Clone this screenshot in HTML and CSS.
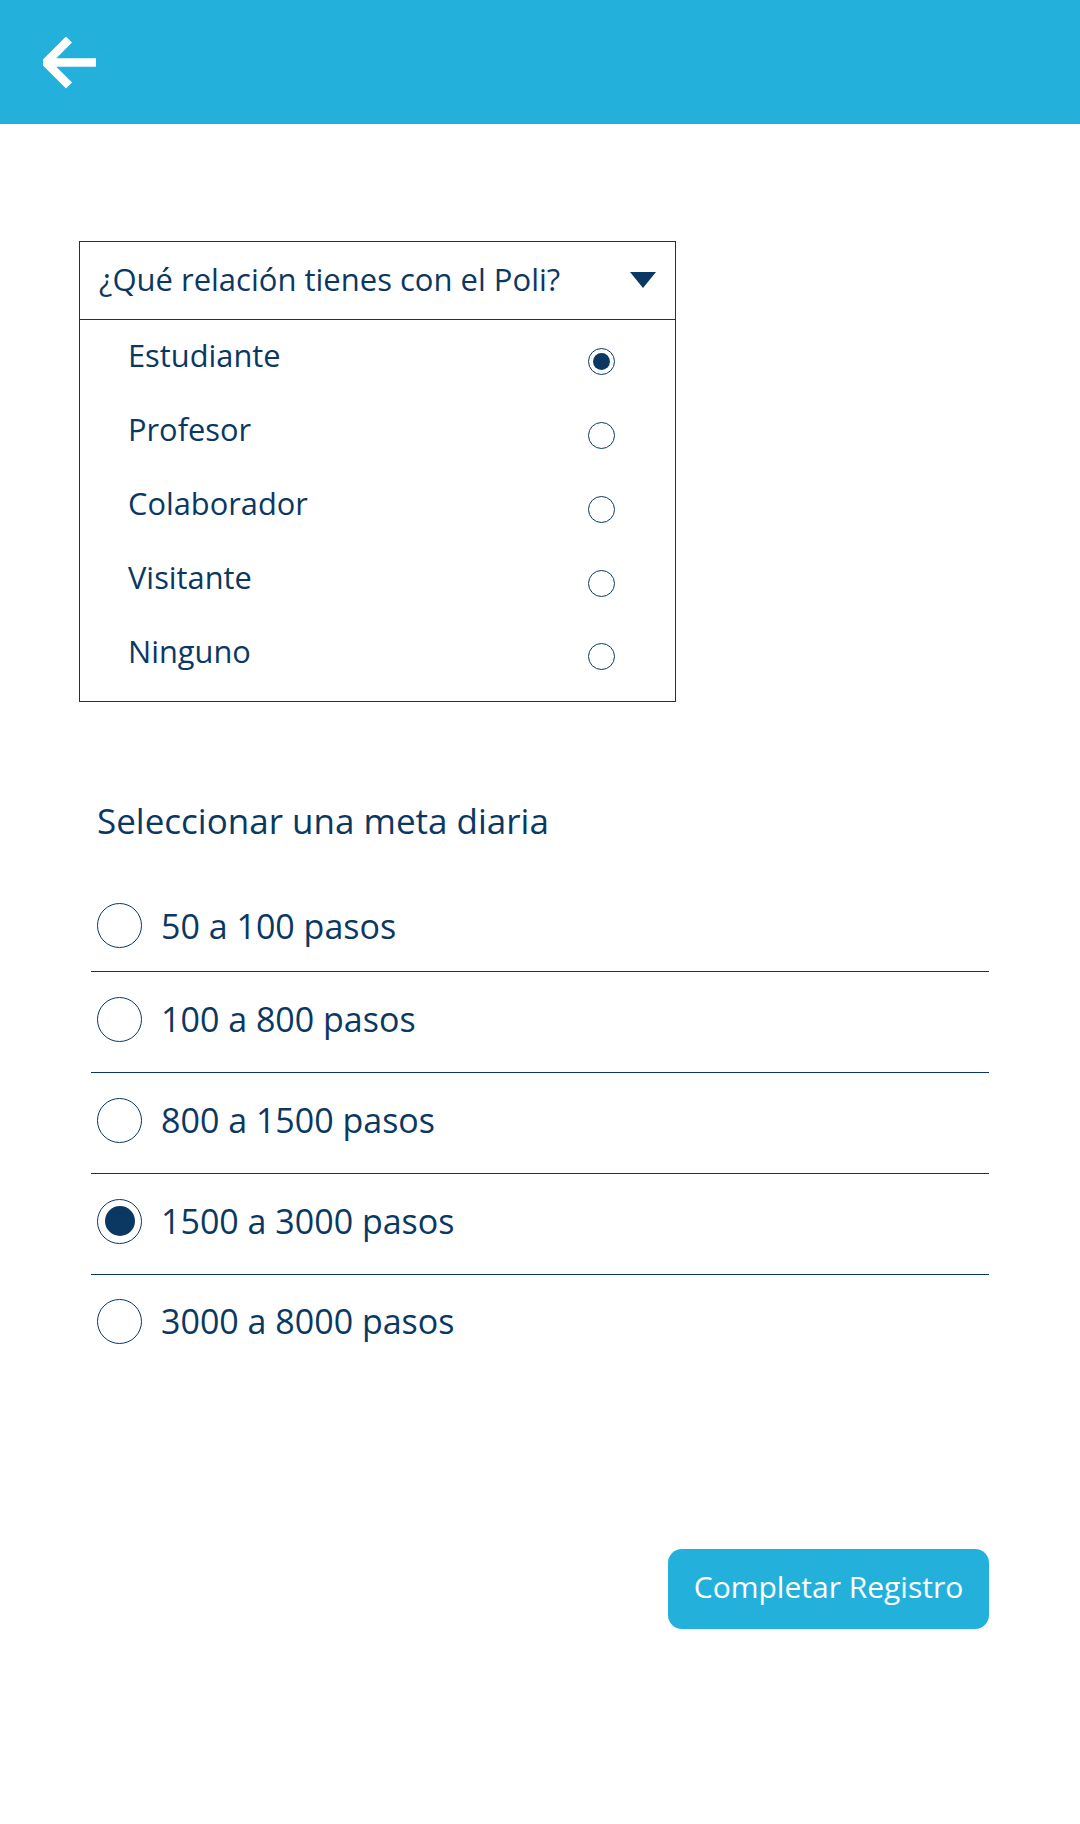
FILE: index.html
```html
<!DOCTYPE html>
<html lang="es">
<head>
<meta charset="utf-8">
<title>Registro</title>
<link rel="stylesheet" href="styles.css">
</head>
<body>
<header class="topbar">
  <svg class="back" width="54" height="52" viewBox="0 0 54 52" aria-label="Volver">
    <path d="M53 25.5H5 M26 2.5L3 25.5L26 48.5" fill="none" stroke="#fff" stroke-width="8.5" stroke-linejoin="miter" stroke-miterlimit="4"/>
  </svg>
</header>
<main class="content">
  <section class="dropdown">
    <div class="dropdown-head">
      <span class="dropdown-title">¿Qué relación tienes con el Poli?</span>
      <span class="caret"></span>
    </div>
    <ul class="dropdown-list">
      <li class="opt"><span class="opt-label">Estudiante</span><span class="radio-s checked"></span></li>
      <li class="opt"><span class="opt-label">Profesor</span><span class="radio-s"></span></li>
      <li class="opt"><span class="opt-label">Colaborador</span><span class="radio-s"></span></li>
      <li class="opt"><span class="opt-label">Visitante</span><span class="radio-s"></span></li>
      <li class="opt"><span class="opt-label">Ninguno</span><span class="radio-s"></span></li>
    </ul>
  </section>
  <section class="goals">
    <h2 class="goals-title">Seleccionar una meta diaria</h2>
    <ul class="goal-list">
      <li class="goal first"><span class="radio-l"></span><span class="goal-label">50 a 100 pasos</span></li>
      <li class="goal"><span class="radio-l"></span><span class="goal-label">100 a 800 pasos</span></li>
      <li class="goal"><span class="radio-l"></span><span class="goal-label">800 a 1500 pasos</span></li>
      <li class="goal"><span class="radio-l checked"></span><span class="goal-label">1500 a 3000 pasos</span></li>
      <li class="goal last"><span class="radio-l"></span><span class="goal-label">3000 a 8000 pasos</span></li>
    </ul>
  </section>
  <div class="actions">
    <button class="btn">Completar Registro</button>
  </div>
</main>
</body>
</html>
```

FILE: styles.css
```css
* { box-sizing: border-box; }
html, body { margin: 0; padding: 0; }
body {
  width: 1080px;
  height: 1824px;
  background: #fff;
  font-family: "Open Sans", "Noto Sans", sans-serif;
  color: #0b3863;
}
.topbar {
  height: 124px;
  background: #23b1dc;
  display: flex;
  align-items: center;
  padding-left: 43px;
}
.back { display: block; margin-top: 2px; }
.content { display: flex; flex-direction: column; }

.dropdown {
  margin: 117px 0 0 79px;
  width: 597px;
}
.dropdown-head {
  height: 79px;
  border: 1.5px solid #0b3863;
  display: flex;
  align-items: center;
  justify-content: space-between;
  padding: 0 19px 0 19px;
}
.dropdown-title { font-size: 31px; line-height: 40px; margin-top: -4px; }
.caret {
  width: 0; height: 0;
  border-left: 13px solid transparent;
  border-right: 13px solid transparent;
  border-top: 16px solid #0b3863;
  margin-top: -2px;
}
.dropdown-list {
  list-style: none;
  margin: 0;
  border: 1.5px solid #0b3863;
  border-top: none;
  padding: 4px 60px 8px 48px;
}
.opt {
  height: 74px;
  display: flex;
  align-items: center;
  justify-content: space-between;
}
.opt:last-child { height: 73px; }
.opt-label { font-size: 30.8px; line-height: 40px; margin-top: -12px; }
.radio-s {
  width: 27px; height: 27px;
  border: 1.5px solid #0b3863;
  border-radius: 50%;
  display: flex; align-items: center; justify-content: center;
}
.radio-s.checked::after {
  content: "";
  width: 17px; height: 17px;
  border-radius: 50%;
  background: #0b3863;
}

.goals { margin: 96px 0 0 91px; width: 898px; }
.goals-title {
  margin: 0 0 0 6px;
  font-weight: 400;
  font-size: 35px;
  line-height: 46px;
}
.goal-list { list-style: none; margin: 36px 0 0; padding: 0; }
.goal {
  height: 101px;
  display: flex;
  align-items: center;
  gap: 19px;
  padding: 0 0 6px 6px;
  border-bottom: 1.5px solid #0b3863;
}
.goal.first { height: 92px; padding-bottom: 0; }
.goal.last { border-bottom: none; height: 96px; padding-bottom: 4px; }
.goal-label { font-size: 34px; line-height: 44px; }
.radio-l {
  width: 45px; height: 45px;
  border: 1.5px solid #0b3863;
  border-radius: 50%;
  flex: none;
  display: flex; align-items: center; justify-content: center;
}
.radio-l.checked::after {
  content: "";
  width: 30px; height: 30px;
  border-radius: 50%;
  background: #0b3863;
}

.actions {
  display: flex;
  justify-content: flex-end;
  width: 989px;
  margin-top: 178px;
}
.btn {
  width: 321px;
  height: 80px;
  border: none;
  border-radius: 14px;
  background: #23b1dc;
  color: #fff;
  font-family: "Open Sans", "Noto Sans", sans-serif;
  font-size: 30px;
  padding: 0 0 5px;
}
```
